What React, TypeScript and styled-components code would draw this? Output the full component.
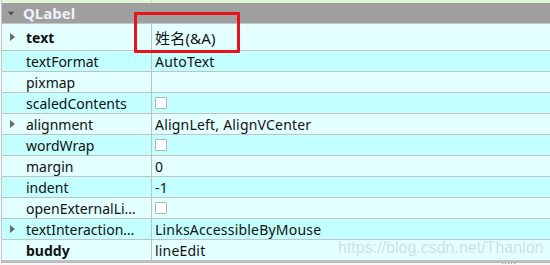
import React from "react";
import styled, { createGlobalStyle } from "styled-components";

const GlobalStyle = createGlobalStyle`
  html, body {
    margin: 0;
    padding: 0;
    background: #f0f0f0;
    overflow: hidden;
  }
  body {
    font-family: "Noto Sans", "Noto Sans CJK SC", sans-serif;
    font-size: 14px;
    color: #111;
  }
`;

type Prop = {
  name: string;
  value?: string;
  check?: boolean;
  bold?: boolean;
  expandable?: boolean;
  tall?: boolean;
};

const props: Prop[] = [
  { name: "text", value: "姓名(&A)", bold: true, expandable: true, tall: true },
  { name: "textFormat", value: "AutoText" },
  { name: "pixmap", value: "" },
  { name: "scaledContents", check: true },
  { name: "alignment", value: "AlignLeft, AlignVCenter", expandable: true },
  { name: "wordWrap", check: true },
  { name: "margin", value: "0" },
  { name: "indent", value: "-1" },
  { name: "openExternalLi…", check: true },
  { name: "textInteraction…", value: "LinksAccessibleByMouse", expandable: true },
  { name: "buddy", value: "lineEdit", bold: true },
];

const Page = styled.div`
  position: relative;
  width: 550px;
  height: 265px;
  padding-left: 1px;
  box-sizing: border-box;
  background: #f7f7f7;
`;

const Table = styled.div`
  border-left: 1px solid #c6c6c6;
  border-bottom: 2px solid #bdbdbd;
  display: flex;
  flex-direction: column;
`;

const TopStrip = styled.div`
  height: 3px;
  display: grid;
  grid-template-columns: 150px 1fr;
  background: #e1f6d6;
  & > div {
    border-right: 1px solid #c6d8bd;
  }
`;

const Section = styled.div`
  height: 20px;
  background: #9f9f9f;
  border-bottom: 1px solid #c4c4c4;
  display: flex;
  align-items: center;
  padding-left: 6px;
  gap: 9px;
  color: #eef2f8;
  font-weight: 700;
  font-size: 15px;
`;

const Row = styled.div<{ $shade: boolean; $tall?: boolean }>`
  display: grid;
  grid-template-columns: 150px 1fr;
  height: ${(p) => (p.$tall ? 26 : 20)}px;
  background: ${(p) => (p.$shade ? "#c4ffff" : "#e4ffff")};
  border-bottom: 1px solid #c2c2c2;
`;

const NameCell = styled.div<{ $bold?: boolean }>`
  box-sizing: border-box;
  border-right: 1px solid #c2c2c2;
  display: flex;
  align-items: center;
  padding-left: 7px;
  gap: 11px;
  font-weight: ${(p) => (p.$bold ? 700 : 400)};
  white-space: nowrap;
  overflow: hidden;
`;

const Arrow = styled.span`
  width: 6px;
  display: inline-flex;
  justify-content: center;
`;

const ValueCell = styled.div<{ $big?: boolean }>`
  display: flex;
  align-items: center;
  padding-left: 3px;
  font-size: ${(p) => (p.$big ? 15 : 14)}px;
  letter-spacing: 0.2px;
  white-space: nowrap;
`;

const Check = styled.span`
  width: 12px;
  height: 12px;
  box-sizing: border-box;
  background: #fff;
  border: 1px solid #b4b4b4;
  border-radius: 1px;
`;

const Highlight = styled.div`
  position: absolute;
  left: 134px;
  top: 12px;
  width: 106px;
  height: 41px;
  box-sizing: border-box;
  border: 3px solid #e8121c;
  border-radius: 1px;
`;

const Watermark = styled.div`
  position: absolute;
  left: 338px;
  top: 239px;
  font-family: "Liberation Sans", Arial, sans-serif;
  font-size: 16px;
  color: rgba(140, 150, 150, 0.3);
  white-space: nowrap;
`;

const Grip = styled.div`
  position: absolute;
  left: 502px;
  top: 263px;
  width: 14px;
  height: 1px;
  background: repeating-linear-gradient(90deg, #a0a0a0 0 1px, transparent 1px 3px);
`;

const RightTri = () => (
  <svg width="5" height="8" viewBox="0 0 5 8">
    <path d="M0 0 L5 4 L0 8 Z" fill="#6a6a6a" />
  </svg>
);

const DownTri = () => (
  <svg width="8" height="5" viewBox="0 0 8 5">
    <path d="M0 0 L8 0 L4 5 Z" fill="#4a4a4a" />
  </svg>
);

export default function App() {
  return (
    <Page>
      <GlobalStyle />
      <Table>
        <TopStrip>
          <div />
        </TopStrip>
        <Section>
          <Arrow>
            <DownTri />
          </Arrow>
          <span>QLabel</span>
        </Section>
        {props.map((p, i) => (
          <Row key={p.name} $shade={i % 2 === 1} $tall={p.tall}>
            <NameCell $bold={p.bold}>
              <Arrow>{p.expandable && <RightTri />}</Arrow>
              <span>{p.name}</span>
            </NameCell>
            <ValueCell $big={p.tall}>{p.check ? <Check /> : p.value}</ValueCell>
          </Row>
        ))}
      </Table>
      <Highlight />
      <Watermark>https://blog.csdn.net/Thanlon</Watermark>
      <Grip />
    </Page>
  );
}
